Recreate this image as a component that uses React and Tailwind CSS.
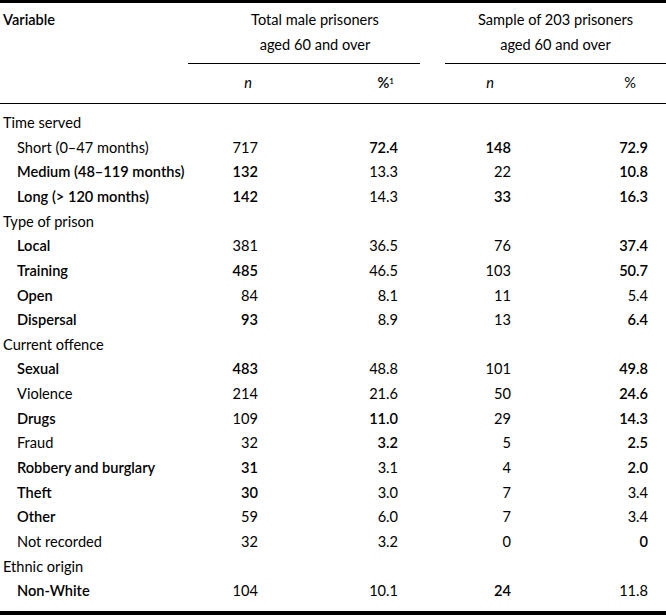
const font = { fontFamily: "Lato, 'Open Sans', sans-serif" };

const sections = [
  {
    title: "Time served",
    rows: [
      ["Short (0–47 months)", "717", "72.4", "148", "72.9", [0, 0, 1, 1, 1]],
      ["Medium (48–119 months)", "132", "13.3", "22", "10.8", [1, 1, 0, 0, 1]],
      ["Long (> 120 months)", "142", "14.3", "33", "16.3", [1, 1, 0, 1, 1]],
    ],
  },
  {
    title: "Type of prison",
    rows: [
      ["Local", "381", "36.5", "76", "37.4", [1, 0, 0, 0, 1]],
      ["Training", "485", "46.5", "103", "50.7", [1, 1, 0, 0, 1]],
      ["Open", "84", "8.1", "11", "5.4", [1, 0, 0, 0, 0]],
      ["Dispersal", "93", "8.9", "13", "6.4", [1, 1, 0, 0, 1]],
    ],
  },
  {
    title: "Current offence",
    rows: [
      ["Sexual", "483", "48.8", "101", "49.8", [1, 1, 0, 0, 1]],
      ["Violence", "214", "21.6", "50", "24.6", [0, 0, 0, 0, 1]],
      ["Drugs", "109", "11.0", "29", "14.3", [1, 0, 1, 0, 1]],
      ["Fraud", "32", "3.2", "5", "2.5", [0, 0, 1, 0, 1]],
      ["Robbery and burglary", "31", "3.1", "4", "2.0", [1, 1, 0, 0, 1]],
      ["Theft", "30", "3.0", "7", "3.4", [1, 1, 0, 0, 0]],
      ["Other", "59", "6.0", "7", "3.4", [1, 0, 0, 0, 0]],
      ["Not recorded", "32", "3.2", "0", "0", [0, 0, 0, 0, 1]],
    ],
  },
  {
    title: "Ethnic origin",
    rows: [["Non-White", "104", "10.1", "24", "11.8", [1, 0, 0, 1, 0]]],
  },
];

const w = (b) => (b ? "font-semibold" : "font-normal");

const Row = ({ r }) => {
  const [label, n1, p1, n2, p2, b] = r;
  return (
    <div className="grid grid-cols-[188px_112px_120px_25px_115px_106px] h-[24.65px] items-center">
      <div className={`pl-[17px] ${w(b[0])}`}>{label}</div>
      <div className={`text-right pr-[42px] ${w(b[1])}`}>{n1}</div>
      <div className={`text-right pr-[22px] ${w(b[2])}`}>{p1}</div>
      <div />
      <div className={`text-right pr-[49px] ${w(b[3])}`}>{n2}</div>
      <div className={`text-right pr-[18px] ${w(b[4])}`}>{p2}</div>
    </div>
  );
};

export default function App() {
  return (
    <div className="w-[666px] h-[616px] bg-white text-black text-[14.6px] leading-none" style={font}>
      <div className="border-t-[3px] border-black" />
      {/* Header */}
      <div className="grid grid-cols-[188px_232px_25px_221px] h-[61px]">
        <div className="pl-[3px] pt-[10px] font-semibold">Variable</div>
        <div className="flex flex-col items-center pt-[10px] pl-[22px] gap-[10px] border-b border-black">
          <span>Total male prisoners</span>
          <span>aged 60 and over</span>
        </div>
        <div />
        <div className="flex flex-col items-center pt-[10px] gap-[10px] border-b border-black">
          <span>Sample of 203 prisoners</span>
          <span>aged 60 and over</span>
        </div>
      </div>
      <div className="grid grid-cols-[188px_112px_120px_25px_115px_106px] h-[40px] items-center border-b border-black">
        <div />
        <div className="italic text-right pr-[48px]">n</div>
        <div className="text-right pr-[26px] font-semibold">
          %<sup className="text-[8px]">1</sup>
        </div>
        <div />
        <div className="italic text-right pr-[66px]">n</div>
        <div className="text-right pr-[30px]">%</div>
      </div>
      {/* Body */}
      <div className="pt-[7px] h-[507px]">
        {sections.map((s) => (
          <div key={s.title}>
            <div className="h-[24.65px] flex items-center pl-[3px]">{s.title}</div>
            {s.rows.map((r) => (
              <Row key={r[0]} r={r} />
            ))}
          </div>
        ))}
      </div>
      <div className="border-t-4 border-black" />
    </div>
  );
}
